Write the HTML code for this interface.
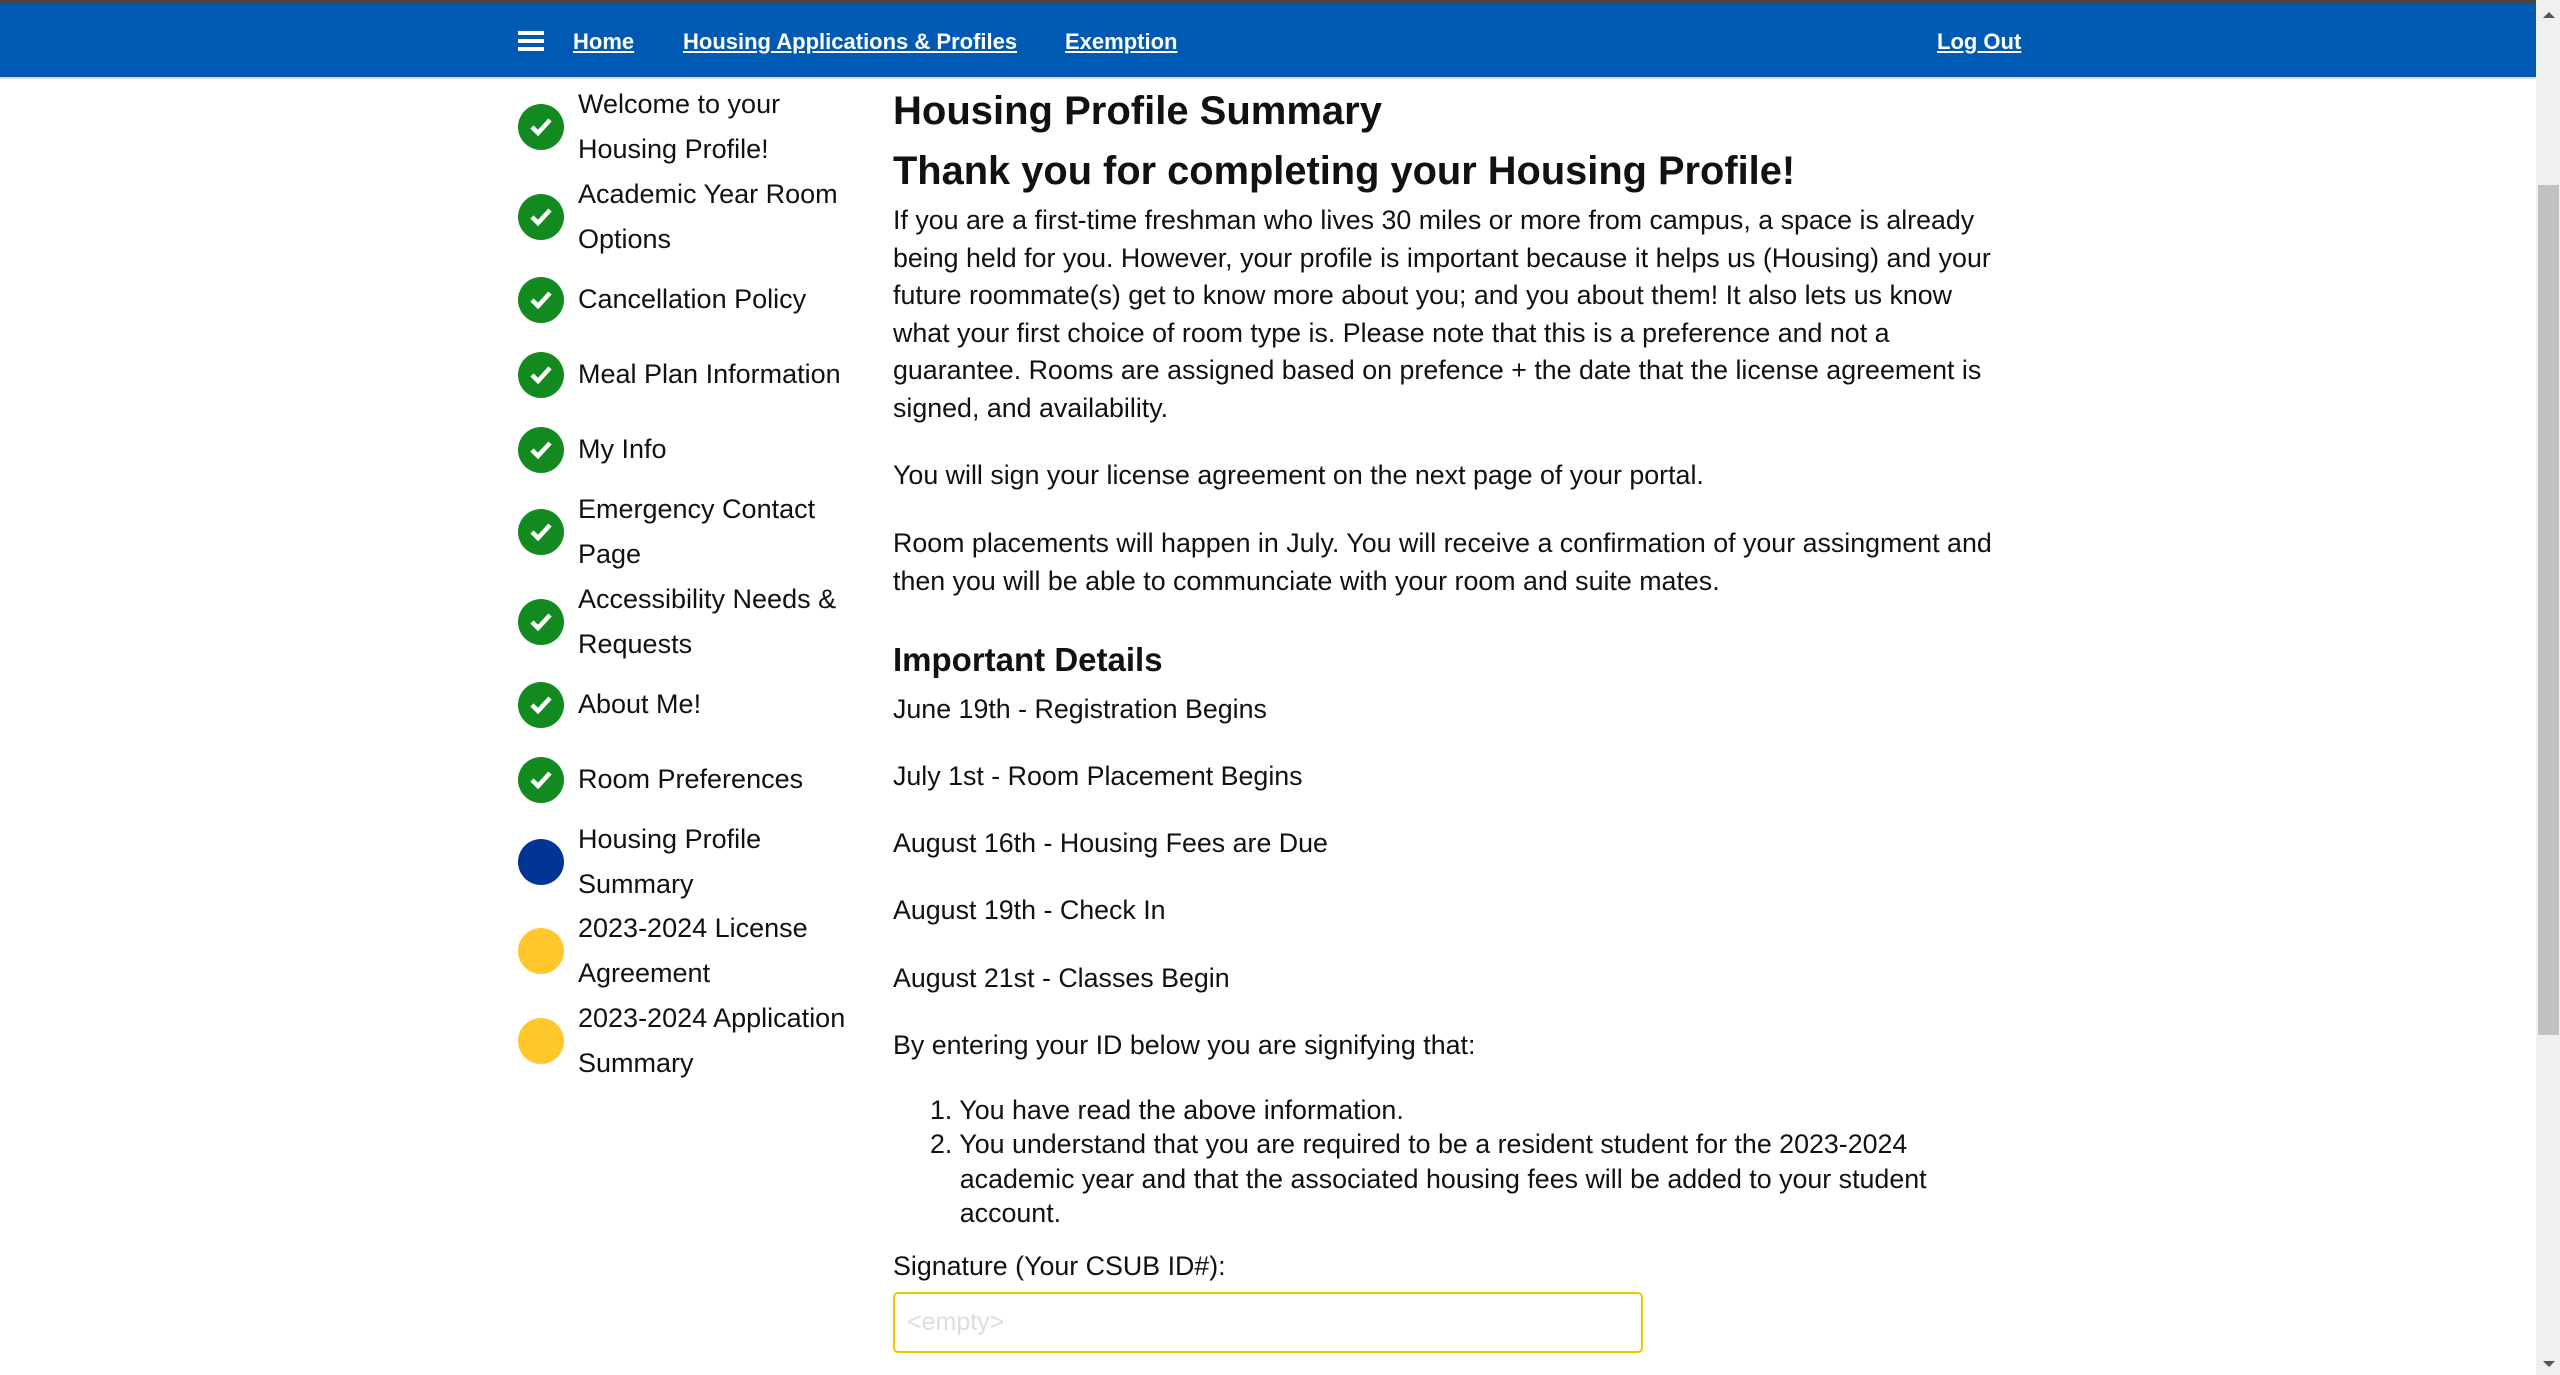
<!DOCTYPE html>
<html><head><meta charset="utf-8"><style>
*{margin:0;padding:0;box-sizing:border-box}
body{width:2560px;height:1375px;overflow:hidden;background:#fff;font-family:"Liberation Sans",Arial,sans-serif;color:#111;position:relative}
.a{position:absolute;white-space:nowrap}
.top{position:absolute;left:0;top:0;width:2536px;height:3px;background:#444}
.hdr{position:absolute;left:0;top:3px;width:2536px;height:76px;background:#005ab4;border-bottom:2px solid #dde}
.nav{color:#fff;font-weight:bold;font-size:22px;text-decoration:underline;top:29px}
.ham{position:absolute;left:518px;top:31px;width:26px;height:4px;background:#fff;box-shadow:0 8px 0 #fff,0 16px 0 #fff}
.ic{position:absolute;left:518px;width:46px;height:46px;border-radius:50%;background:#138a1f}
.ic svg{position:absolute;left:11px;top:12px}
.st{position:absolute;left:578px;font-size:27px;line-height:45px;color:#111;white-space:nowrap}
.p{position:absolute;left:893px;font-size:26.8px;line-height:37.6px;white-space:nowrap}
.sb{position:absolute;left:2536px;top:0;width:24px;height:1375px;background:#f0f0f0}
</style></head><body>
<div class="top"></div>
<div class="hdr"></div>
<div class="ham"></div>
<div class="a nav" style="left:573px">Home</div>
<div class="a nav" style="left:683px">Housing Applications &amp; Profiles</div>
<div class="a nav" style="left:1065px">Exemption</div>
<div class="a nav" style="left:1937px">Log Out</div>

<div class="sb"><div style="position:absolute;left:7px;top:12px;border-left:6px solid transparent;border-right:6px solid transparent;border-bottom:6px solid #555"></div>
<div style="position:absolute;left:2px;top:185px;width:21px;height:850px;background:#c1c1c1"></div>
<div style="position:absolute;left:7px;bottom:8px;border-left:6px solid transparent;border-right:6px solid transparent;border-top:6px solid #555"></div></div>

<div class="ic" style="top:104px"><svg width="24" height="22" viewBox="0 0 24 22"><path d="M3 11l6 6L21 4" stroke="#fff" stroke-width="4.5" fill="none"/></svg></div>
<div class="st" style="top:82px">Welcome to your<br>Housing Profile!</div>
<div class="ic" style="top:194px"><svg width="24" height="22" viewBox="0 0 24 22"><path d="M3 11l6 6L21 4" stroke="#fff" stroke-width="4.5" fill="none"/></svg></div>
<div class="st" style="top:172px">Academic Year Room<br>Options</div>
<div class="ic" style="top:277px"><svg width="24" height="22" viewBox="0 0 24 22"><path d="M3 11l6 6L21 4" stroke="#fff" stroke-width="4.5" fill="none"/></svg></div>
<div class="st" style="top:277px">Cancellation Policy</div>
<div class="ic" style="top:352px"><svg width="24" height="22" viewBox="0 0 24 22"><path d="M3 11l6 6L21 4" stroke="#fff" stroke-width="4.5" fill="none"/></svg></div>
<div class="st" style="top:352px">Meal Plan Information</div>
<div class="ic" style="top:427px"><svg width="24" height="22" viewBox="0 0 24 22"><path d="M3 11l6 6L21 4" stroke="#fff" stroke-width="4.5" fill="none"/></svg></div>
<div class="st" style="top:427px">My Info</div>
<div class="ic" style="top:509px"><svg width="24" height="22" viewBox="0 0 24 22"><path d="M3 11l6 6L21 4" stroke="#fff" stroke-width="4.5" fill="none"/></svg></div>
<div class="st" style="top:487px">Emergency Contact<br>Page</div>
<div class="ic" style="top:599px"><svg width="24" height="22" viewBox="0 0 24 22"><path d="M3 11l6 6L21 4" stroke="#fff" stroke-width="4.5" fill="none"/></svg></div>
<div class="st" style="top:577px">Accessibility Needs &amp;<br>Requests</div>
<div class="ic" style="top:682px"><svg width="24" height="22" viewBox="0 0 24 22"><path d="M3 11l6 6L21 4" stroke="#fff" stroke-width="4.5" fill="none"/></svg></div>
<div class="st" style="top:682px">About Me!</div>
<div class="ic" style="top:757px"><svg width="24" height="22" viewBox="0 0 24 22"><path d="M3 11l6 6L21 4" stroke="#fff" stroke-width="4.5" fill="none"/></svg></div>
<div class="st" style="top:757px">Room Preferences</div>
<div class="ic" style="top:839px;background:#003594"></div>
<div class="st" style="top:817px">Housing Profile<br>Summary</div>
<div class="ic" style="top:928px;background:#ffc72c"></div>
<div class="st" style="top:906px">2023-2024 License<br>Agreement</div>
<div class="ic" style="top:1018px;background:#ffc72c"></div>
<div class="st" style="top:996px">2023-2024 Application<br>Summary</div>

<div class="a" style="left:893px;top:89px;font-size:40px;font-weight:bold">Housing Profile Summary</div>
<div class="a" style="left:893px;top:149px;font-size:39.8px;font-weight:bold">Thank you for completing your Housing Profile!</div>
<div class="p" style="top:202px">If you are a first-time freshman who lives 30 miles or more from campus, a space is already<br>being held for you. However, your profile is important because it helps us (Housing) and your<br>future roommate(s) get to know more about you; and you about them! It also lets us know<br>what your first choice of room type is. Please note that this is a preference and not a<br>guarantee. Rooms are assigned based on prefence + the date that the license agreement is<br>signed, and availability.</div>
<div class="p" style="top:457px">You will sign your license agreement on the next page of your portal.</div>
<div class="p" style="top:525px">Room placements will happen in July. You will receive a confirmation of your assingment and<br>then you will be able to communciate with your room and suite mates.</div>
<div class="a" style="left:893px;top:641px;font-size:33px;font-weight:bold">Important Details</div>
<div class="p" style="top:691px">June 19th - Registration Begins</div>
<div class="p" style="top:758px">July 1st - Room Placement Begins</div>
<div class="p" style="top:825px">August 16th - Housing Fees are Due</div>
<div class="p" style="top:892px">August 19th - Check In</div>
<div class="p" style="top:960px">August 21st - Classes Begin</div>
<div class="p" style="top:1027px">By entering your ID below you are signifying that:</div>
<div class="p" style="top:1093px;left:930px;line-height:34.3px">1. You have read the above information.<br>2. You understand that you are required to be a resident student for the 2023-2024<br>&nbsp;&nbsp;&nbsp;&nbsp;academic year and that the associated housing fees will be added to your student<br>&nbsp;&nbsp;&nbsp;&nbsp;account.</div>
<div class="p" style="top:1248px">Signature (Your CSUB ID#):</div>
<div style="position:absolute;left:893px;top:1292px;width:750px;height:61px;border:2px solid #f0c400;border-radius:5px"></div>
<div class="a" style="left:907px;top:1308px;font-size:25px;color:#ddd">&lt;empty&gt;</div>
</body></html>
